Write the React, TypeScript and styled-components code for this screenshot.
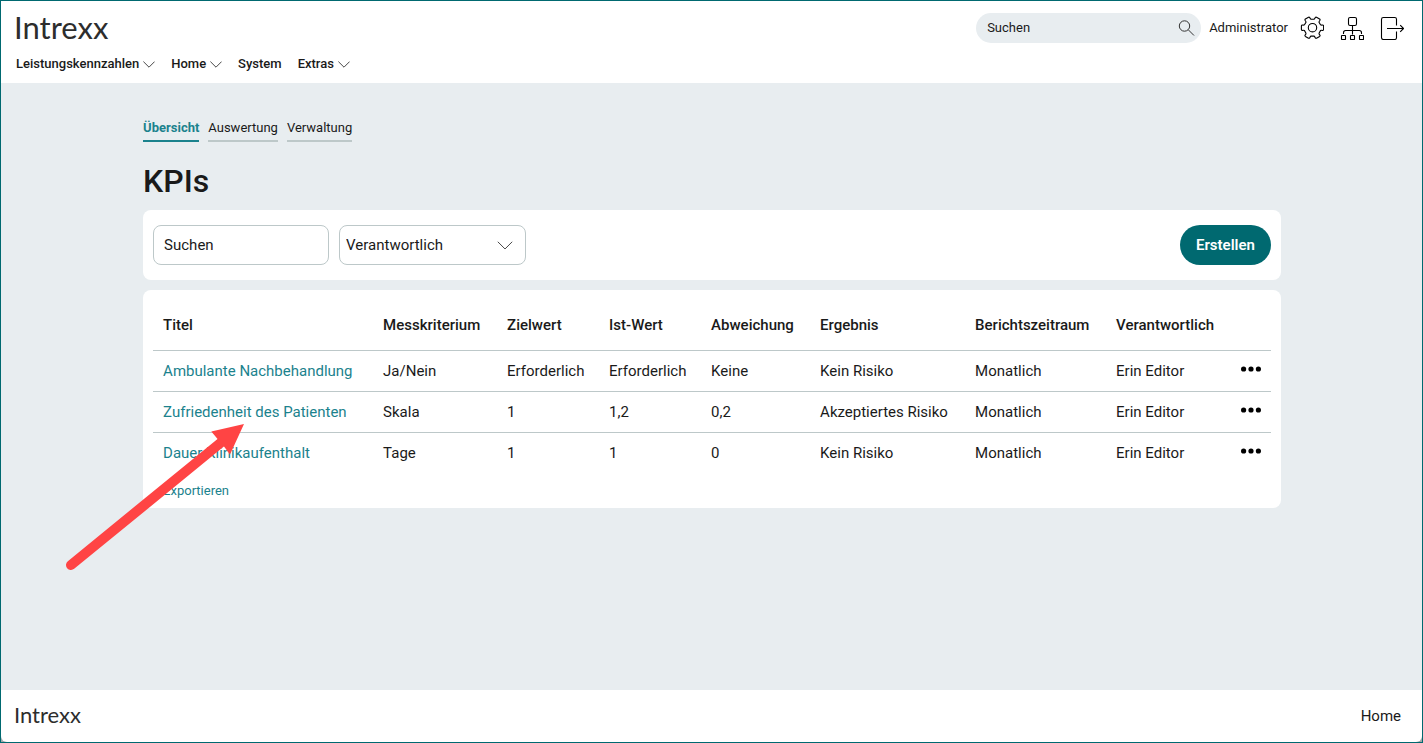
import React from "react";
import styled, { createGlobalStyle } from "styled-components";

const color = {
  petrol: "#006970",
  link: "#1b828d",
  ground: "#e8edf0",
  line: "#bdc8c9",
  text: "#1a1a1a",
  arrow: "#ff4444",
};

const GlobalStyle = createGlobalStyle`
  *, *::before, *::after { box-sizing: border-box; }
  body {
    margin: 0;
    color: ${color.text};
    font: 400 15px/20px Roboto, "Liberation Sans", sans-serif;
  }
  button, input, select { font: inherit; color: inherit; margin: 0; }
  a { text-decoration: none; color: inherit; }
`;

const Frame = styled.div`
  display: flex;
  flex-direction: column;
  min-height: 100vh;
  border: 1px solid ${color.petrol};
  background: ${color.ground};
`;

const Header = styled.header`
  display: flex;
  flex-direction: column;
  gap: 11px;
  padding: 12px 18px 9px 15px;
  background: #fff;
`;

const TopRow = styled.div`
  display: flex;
  align-items: center;
  justify-content: space-between;
  height: 30px;
`;

const Wordmark = styled.a<{ $size: number }>`
  margin-left: -2px;
  padding-bottom: 3px;
  font-family: Lato, sans-serif;
  font-size: ${(p) => p.$size}px;
  line-height: 30px;
  color: #2d2d2d;
`;

const Tools = styled.div`
  display: flex;
  align-items: center;
  gap: 8px;
  font-size: 13px;
`;

const SearchPill = styled.form`
  display: flex;
  align-items: center;
  width: 225px;
  height: 30px;
  padding: 0 6px 0 11px;
  border-radius: 15px;
  background: ${color.ground};
`;

const PillInput = styled.input`
  flex: 1;
  min-width: 0;
  padding: 0;
  border: 0;
  outline: 0;
  background: none;
  &::placeholder { color: ${color.text}; opacity: 1; }
`;

const IconButton = styled.button`
  display: flex;
  padding: 0;
  border: 0;
  background: none;
  cursor: pointer;
`;

const IconGroup = styled.div`
  display: flex;
  gap: 16px;
  margin-left: 4px;
`;

const Nav = styled.nav`
  display: flex;
  gap: 16px;
  height: 20px;
  font-size: 13px;
  font-weight: 500;
`;

const NavItem = styled.button`
  display: flex;
  align-items: center;
  gap: 4px;
  padding: 0;
  border: 0;
  background: none;
  cursor: pointer;
`;

const Main = styled.main`
  flex: 1;
  width: calc(80% + 1px);
  margin-left: 10%;
  padding: 35px 0;
`;

const Tabs = styled.nav`
  display: flex;
  gap: 9px;
  font-size: 13px;
`;

const Tab = styled.a<{ $active?: boolean }>`
  padding-bottom: 2px;
  border-bottom: 2px solid ${(p) => (p.$active ? color.link : color.line)};
  color: ${(p) => (p.$active ? color.link : color.text)};
  font-weight: ${(p) => (p.$active ? 700 : 400)};
`;

const Title = styled.h1`
  margin: 20px 0 10px;
  font-size: 32px;
  line-height: 38px;
  font-weight: 500;
`;

const Card = styled.section`
  position: relative;
  padding: 10px;
  border-radius: 8px;
  background: #fff;
  & + & { margin-top: 10px; }
`;

const FilterBar = styled.form`
  display: flex;
  align-items: center;
  gap: 10px;
  padding: 5px 0;
`;

const FilterInput = styled.input`
  width: 176px;
  height: 40px;
  padding: 0 10px;
  border: 1px solid ${color.line};
  border-radius: 8px;
  &::placeholder { color: ${color.text}; opacity: 1; }
`;

const SelectBox = styled.div`
  display: grid;
  align-items: center;
  width: 187px;
  & > * { grid-area: 1 / 1; }
  & > svg { justify-self: end; margin-right: 13px; pointer-events: none; }
`;

const FilterSelect = styled.select`
  appearance: none;
  width: 100%;
  height: 40px;
  padding: 0 30px 0 6px;
  border: 1px solid ${color.line};
  border-radius: 8px;
  background: #fff;
`;

const PrimaryButton = styled.button`
  height: 40px;
  margin-left: auto;
  padding: 0 16px;
  border: 0;
  border-radius: 20px;
  background: ${color.petrol};
  color: #fff;
  font-weight: 600;
  cursor: pointer;
`;

const Table = styled.table`
  width: 100%;
  table-layout: fixed;
  border-collapse: separate;
  border-spacing: 0;
`;

const HeadCell = styled.th`
  height: 51px;
  padding: 0 10px;
  border-bottom: 1px solid ${color.line};
  font-weight: 500;
  text-align: left;
  white-space: nowrap;
`;

const Cell = styled.td`
  height: 41px;
  padding: 0 10px;
  border-bottom: 1px solid ${color.line};
  white-space: nowrap;
  tr:last-child > & { height: 40px; border-bottom: 0; }
`;

const MenuButton = styled(IconButton)`
  margin-left: auto;
  padding-bottom: 4px;
`;

const TextLink = styled.a`
  color: ${color.link};
`;

const ExportRow = styled.div`
  padding: 11px 10px 0;
  font-size: 13px;
  line-height: 14px;
`;

const ArrowOverlay = styled.svg`
  position: absolute;
  left: -80px;
  top: 130px;
  pointer-events: none;
`;

const FooterGround = styled.div`
  background: linear-gradient(${color.ground}, #a0a8a9);
`;

const Footer = styled.footer`
  display: flex;
  align-items: center;
  justify-content: space-between;
  height: 52px;
  padding: 0 21px 0 15px;
  border-radius: 0 0 6px 6px;
  background: #fff;
`;

const Chevron = ({ width = 12, stroke = 0.9 }: { width?: number; stroke?: number }) => (
  <svg width={width} height={width / 2 + 1} viewBox="0 0 12 7" fill="none" stroke="#333" strokeWidth={stroke} aria-hidden="true">
    <path d="M0.4 0.6 6 6.2 11.6 0.6" />
  </svg>
);

const SearchIcon = () => (
  <svg width="17" height="17" viewBox="0 0 17 17" fill="none" stroke="#333" aria-hidden="true">
    <circle cx="6.5" cy="6" r="5.2" />
    <path d="M10.3 9.8 16 15.5" />
  </svg>
);

/* Six rounded teeth, one every 60 degrees, joined by shallow valleys. */
const gearPath = (() => {
  const tooth: [number, number][] = [
    [8, -2.9], [8.9, -2.4], [9.8, -2.7], [10.9, -2.9], [11.1, -1.8],
    [11.1, 1.8], [10.9, 2.9], [9.8, 2.7], [8.9, 2.4], [8, 2.9],
  ];
  let d = "";
  for (let i = 0; i < 6; i++) {
    const a = (i * Math.PI) / 3;
    const p = tooth.map(([x, y]) =>
      `${(12.5 + x * Math.cos(a) - y * Math.sin(a)).toFixed(2)} ${(11.7 + x * Math.sin(a) + y * Math.cos(a)).toFixed(2)}`
    );
    d += `${i === 0 ? "M" : "L"}${p[0]}Q${p[1]} ${p[2]}Q${p[3]} ${p[4]}L${p[5]}Q${p[6]} ${p[7]}Q${p[8]} ${p[9]}`;
  }
  return d + "Z";
})();

const iconProps = {
  width: 24,
  height: 24,
  viewBox: "0 0 24 24",
  fill: "none",
  stroke: "#000",
  strokeWidth: 1.1,
  strokeLinejoin: "round" as const,
  "aria-hidden": true,
};

const GearIcon = () => (
  <svg {...iconProps}>
    <path d={gearPath} />
    <circle cx="12.5" cy="11.7" r="4.2" />
  </svg>
);

const SitemapIcon = () => (
  <svg {...iconProps}>
    <rect x="8.5" y="1.5" width="8" height="8" rx="1.6" />
    <path d="M12.5 9.5v9M3.5 18v-1.300q0-2.200 2.200-2.200h13.600q2.200 0 2.200 2.200v1.300" />
    <rect x="1.5" y="19.5" width="4" height="4" rx="0.5" />
    <rect x="10.5" y="19.5" width="4" height="4" rx="0.5" />
    <rect x="19.5" y="19.5" width="4" height="4" rx="0.5" />
  </svg>
);

const LogoutIcon = () => (
  <svg {...iconProps}>
    <path d="M16.500 9.500V3.300q0-1.800-1.800-1.800H3.400q-1.900 0-1.900 1.900v18.200q0 1.900 1.900 1.900h11.300q1.800 0 1.800-1.800V15.500M7 12.500h16.500M20.200 9.200l3.300 3.300-3.300 3.300" />
  </svg>
);

const DotsIcon = () => (
  <svg width="20" height="6" viewBox="0 0 20 6" aria-hidden="true">
    <circle cx="2.6" cy="3" r="2.6" />
    <circle cx="10" cy="3" r="2.6" />
    <circle cx="17.4" cy="3" r="2.6" />
  </svg>
);

const columns = [
  { label: "Titel", width: 220 },
  { label: "Messkriterium", width: 124 },
  { label: "Zielwert", width: 102 },
  { label: "Ist-Wert", width: 102 },
  { label: "Abweichung", width: 109 },
  { label: "Ergebnis", width: 155 },
  { label: "Berichtszeitraum", width: 141 },
  { label: "Verantwortlich", width: 115 },
];

const rows = [
  ["Ambulante Nachbehandlung", "Ja/Nein", "Erforderlich", "Erforderlich", "Keine", "Kein Risiko", "Monatlich", "Erin Editor"],
  ["Zufriedenheit des Patienten", "Skala", "1", "1,2", "0,2", "Akzeptiertes Risiko", "Monatlich", "Erin Editor"],
  ["Dauer Klinikaufenthalt", "Tage", "1", "1", "0", "Kein Risiko", "Monatlich", "Erin Editor"],
];

export default function App() {
  return (
    <Frame>
      <GlobalStyle />
      <Header>
        <TopRow>
          <Wordmark href="#" $size={31}>Intrexx</Wordmark>
          <Tools>
            <SearchPill role="search">
              <PillInput type="text" placeholder="Suchen" aria-label="Portal durchsuchen" />
              <IconButton type="button" aria-label="Suche starten"><SearchIcon /></IconButton>
            </SearchPill>
            <a href="#">Administrator</a>
            <IconGroup>
              <IconButton aria-label="Einstellungen"><GearIcon /></IconButton>
              <IconButton aria-label="Struktur"><SitemapIcon /></IconButton>
              <IconButton aria-label="Abmelden"><LogoutIcon /></IconButton>
            </IconGroup>
          </Tools>
        </TopRow>
        <Nav aria-label="Hauptmenü">
          <NavItem>Leistungskennzahlen<Chevron /></NavItem>
          <NavItem>Home<Chevron /></NavItem>
          <NavItem>System</NavItem>
          <NavItem>Extras<Chevron /></NavItem>
        </Nav>
      </Header>

      <Main>
        <Tabs aria-label="Bereiche">
          <Tab href="#" $active>Übersicht</Tab>
          <Tab href="#">Auswertung</Tab>
          <Tab href="#">Verwaltung</Tab>
        </Tabs>
        <Title>KPIs</Title>

        <Card>
          <FilterBar>
            <FilterInput type="text" placeholder="Suchen" aria-label="KPIs durchsuchen" />
            <SelectBox>
              <FilterSelect aria-label="Verantwortlich">
                <option>Verantwortlich</option>
                <option>Erin Editor</option>
              </FilterSelect>
              <Chevron width={16} stroke={0.7} />
            </SelectBox>
            <PrimaryButton type="button">Erstellen</PrimaryButton>
          </FilterBar>
        </Card>

        <Card>
          <Table>
            <colgroup>
              {columns.map((c) => <col key={c.label} width={c.width} />)}
              <col width={50} />
            </colgroup>
            <thead>
              <tr>
                {columns.map((c) => <HeadCell key={c.label} scope="col">{c.label}</HeadCell>)}
                <HeadCell as="td" />
              </tr>
            </thead>
            <tbody>
              {rows.map(([title, ...values]) => (
                <tr key={title}>
                  <Cell><TextLink href="#">{title}</TextLink></Cell>
                  {values.map((v, i) => <Cell key={i}>{v}</Cell>)}
                  <Cell>
                    <MenuButton aria-label={`Aktionen für ${title}`}><DotsIcon /></MenuButton>
                  </Cell>
                </tr>
              ))}
            </tbody>
          </Table>
          <ExportRow><TextLink href="#">Exportieren</TextLink></ExportRow>
          <ArrowOverlay width="190" height="160" viewBox="0 0 190 160" aria-hidden="true">
            <path d="M8 145 158 22.5" stroke={color.arrow} strokeWidth="10" strokeLinecap="round" />
            <path d="M181 4 148.300 11.500 155 19.500 161 26.500 167 34.500Z" fill={color.arrow} />
          </ArrowOverlay>
        </Card>
      </Main>

      <FooterGround>
        <Footer>
          <Wordmark href="#" $size={22}>Intrexx</Wordmark>
          <a href="#">Home</a>
        </Footer>
      </FooterGround>
    </Frame>
  );
}
